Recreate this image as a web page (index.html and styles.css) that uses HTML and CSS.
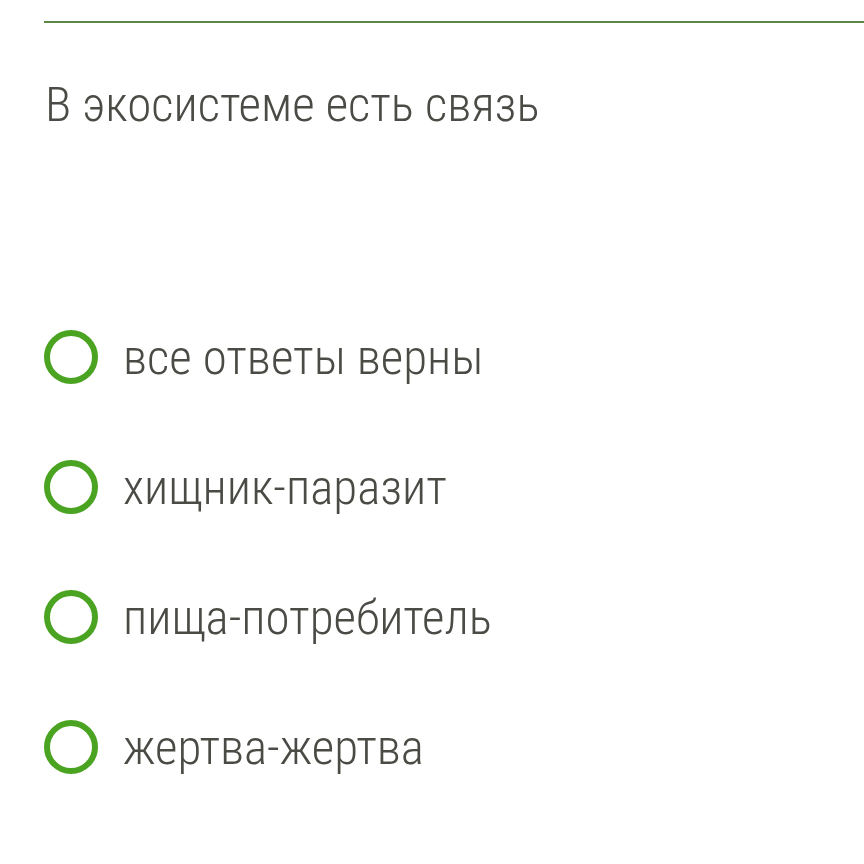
FILE: index.html
```html
<!DOCTYPE html>
<html lang="ru">
<head>
<meta charset="utf-8">
<link rel="stylesheet" href="styles.css">
</head>
<body>
<div class="page">
  <div class="rule"></div>
  <h1 class="question">В экосистеме есть связь</h1>
  <ul class="options">
    <li class="option"><span class="radio"></span><span class="label">все ответы верны</span></li>
    <li class="option"><span class="radio"></span><span class="label">хищник-паразит</span></li>
    <li class="option"><span class="radio"></span><span class="label">пища-потребитель</span></li>
    <li class="option"><span class="radio"></span><span class="label">жертва-жертва</span></li>
  </ul>
</div>
</body>
</html>
```
FILE: styles.css
```css
html, body {
  margin: 0;
  padding: 0;
  background: #ffffff;
}
.page {
  padding: 21px 0 0 44px;
  font-family: "Roboto Condensed", Roboto, "Liberation Sans", sans-serif;
  font-stretch: condensed;
  font-weight: 300;
  color: #4b4b46;
}
.rule {
  height: 2px;
  background: #5b8a48;
}
.question {
  margin: 53px 0 0 1px;
  font-size: 49px;
  font-weight: 300;
  line-height: 57px;
}
.options {
  list-style: none;
  margin: 197px 0 0 0;
  padding: 0;
  display: flex;
  flex-direction: column;
  gap: 76px;
}
.option {
  display: flex;
  align-items: center;
  gap: 25px;
  height: 54px;
}
.radio {
  box-sizing: border-box;
  width: 54px;
  height: 54px;
  border: 6px solid #4ba421;
  border-radius: 50%;
  flex: none;
}
.label {
  font-size: 49px;
  line-height: 57px;
}
```
